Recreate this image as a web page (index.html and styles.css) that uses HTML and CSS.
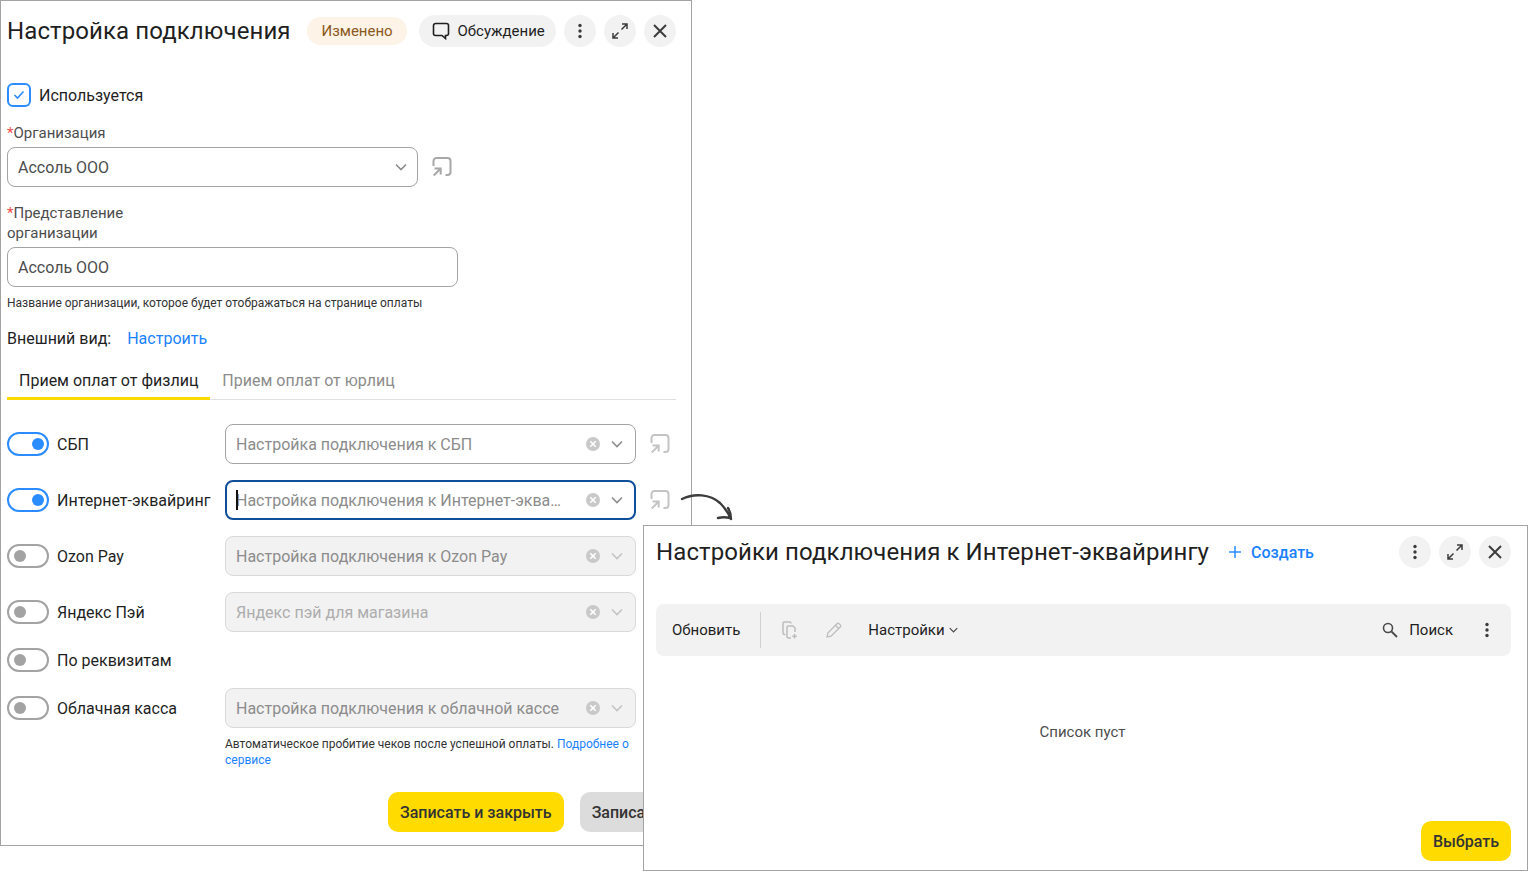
FILE: index.html
```html
<!DOCTYPE html>
<html lang="ru">
<head>
    <meta charset="UTF-8">
    <title>Настройка подключения</title>
    <link rel="stylesheet" href="styles.css">
</head>
<body>

<svg class="defs" width="0" height="0">
    <symbol id="i-link" viewBox="0 0 20 20">
        <path d="M1.5 9V4a3 3 0 0 1 3-3h11a3 3 0 0 1 3 3v11a3 3 0 0 1-3 3h-2M1.7 18.5l6.3-6.3M2.5 11.5H8.700V17.500" fill="none" stroke="currentColor" stroke-width="2"/>
    </symbol>
    <symbol id="i-chevron" viewBox="0 0 12 8">
        <path d="M1 1.500l5 5 5-5" fill="none" stroke="currentColor" stroke-width="1.600"/>
    </symbol>
    <symbol id="i-clear" viewBox="0 0 14 14">
        <circle cx="7" cy="7" r="7" fill="#c9c9c9"/>
        <path d="M4.300 4.300l5.400 5.400M9.700 4.300l-5.400 5.400" stroke="#fff" stroke-width="1.600"/>
    </symbol>
    <symbol id="i-dots" viewBox="0 0 4 16">
        <circle cx="2" cy="2.500" r="1.700" fill="currentColor"/>
        <circle cx="2" cy="8" r="1.700" fill="currentColor"/>
        <circle cx="2" cy="13.500" r="1.700" fill="currentColor"/>
    </symbol>
    <symbol id="i-expand" viewBox="0 0 16 16">
        <path d="M9.500 6.500L15 1M10 1h5v5M6.500 9.500L1 15M1 10v5h5" fill="none" stroke="currentColor" stroke-width="1.500"/>
    </symbol>
    <symbol id="i-close" viewBox="0 0 14 14">
        <path d="M1 1l12 12M13 1L1 13" fill="none" stroke="currentColor" stroke-width="2"/>
    </symbol>
</svg>

<!-- first window -->
<div class="window window-form">
    <div class="head">
        <h1 class="title">Настройка подключения</h1>
        <span class="badge">Изменено</span>
        <button class="pill">
            <svg class="ico-chat" viewBox="0 0 18 18"><path d="M3.500 1.500h11a2 2 0 0 1 2 2v8a2 2 0 0 1-2 2h-1v3l-3.500-3h-6.500a2 2 0 0 1-2-2v-8a2 2 0 0 1 2-2z" fill="none" stroke="currentColor" stroke-width="1.600"/></svg>
            Обсуждение
        </button>
        <button class="round"><svg class="ico-dots"><use href="#i-dots"/></svg></button>
        <button class="round"><svg class="ico-expand"><use href="#i-expand"/></svg></button>
        <button class="round"><svg class="ico-close"><use href="#i-close"/></svg></button>
    </div>

    <div class="check-row">
        <span class="checkbox">
            <svg viewBox="0 0 12 10"><path d="M1.500 5l3 3 6-6.500" fill="none" stroke="#2b8cff" stroke-width="1.600"/></svg>
        </span>
        Используется
    </div>

    <div class="label label-org"><span class="req">*</span>Организация</div>
    <div class="org-row">
        <div class="field field-org">
            <span class="value">Ассоль ООО</span>
            <svg class="ico-chevron"><use href="#i-chevron"/></svg>
        </div>
        <svg class="ico-link"><use href="#i-link"/></svg>
    </div>

    <div class="label label-name"><span class="req">*</span>Представление<br>организации</div>
    <div class="field field-name"><span class="value">Ассоль ООО</span></div>
    <div class="hint hint-name">Название организации, которое будет отображаться на странице оплаты</div>

    <div class="look-row">
        <span>Внешний вид:</span>
        <a class="link">Настроить</a>
    </div>

    <div class="tabs">
        <div class="tab active">Прием оплат от физлиц</div>
        <div class="tab">Прием оплат от юрлиц</div>
    </div>

    <div class="services">
        <div class="service">
            <span class="toggle on"></span>
            <span class="service-name">СБП</span>
            <div class="field field-service">
                <span class="placeholder">Настройка подключения к СБП</span>
                <svg class="ico-clear"><use href="#i-clear"/></svg>
                <svg class="ico-chevron"><use href="#i-chevron"/></svg>
            </div>
            <svg class="ico-link"><use href="#i-link"/></svg>
        </div>
        <div class="service">
            <span class="toggle on"></span>
            <span class="service-name">Интернет-эквайринг</span>
            <div class="field field-service focused">
                <span class="caret"></span>
                <span class="placeholder">Настройка подключения к Интернет-эквайрингу</span>
                <svg class="ico-clear"><use href="#i-clear"/></svg>
                <svg class="ico-chevron"><use href="#i-chevron"/></svg>
            </div>
            <svg class="ico-link"><use href="#i-link"/></svg>
        </div>
        <div class="service">
            <span class="toggle"></span>
            <span class="service-name">Ozon Pay</span>
            <div class="field field-service disabled">
                <span class="placeholder">Настройка подключения к Ozon Pay</span>
                <svg class="ico-clear"><use href="#i-clear"/></svg>
                <svg class="ico-chevron"><use href="#i-chevron"/></svg>
            </div>
        </div>
        <div class="service">
            <span class="toggle"></span>
            <span class="service-name">Яндекс Пэй</span>
            <div class="field field-service disabled">
                <span class="placeholder faint">Яндекс пэй для магазина</span>
                <svg class="ico-clear"><use href="#i-clear"/></svg>
                <svg class="ico-chevron"><use href="#i-chevron"/></svg>
            </div>
        </div>
        <div class="service">
            <span class="toggle"></span>
            <span class="service-name">По реквизитам</span>
        </div>
        <div class="service">
            <span class="toggle"></span>
            <span class="service-name">Облачная касса</span>
            <div class="field field-service disabled">
                <span class="placeholder">Настройка подключения к облачной кассе</span>
                <svg class="ico-clear"><use href="#i-clear"/></svg>
                <svg class="ico-chevron"><use href="#i-chevron"/></svg>
            </div>
        </div>
    </div>
    <div class="hint hint-kassa">Автоматическое пробитие чеков после успешной оплаты. <a class="link">Подробнее о сервисе</a></div>

    <div class="actions">
        <button class="btn btn-yellow">Записать и закрыть</button>
        <button class="btn btn-gray">Записать</button>
    </div>
</div>

<!-- arrow between the windows -->
<svg class="arrow" viewBox="0 0 56 32">
    <path d="M2 9C14 3 30 4 40 13c4 4 8 9 11 16M50 28c-4-1-8-1-12 0M51 29c0-4-1-8-3-11" fill="none" stroke="#3c3c3c" stroke-width="2.400" stroke-linecap="round"/>
</svg>

<!-- second window -->
<div class="window window-list">
    <div class="head head-list">
        <h1 class="title">Настройки подключения к Интернет-эквайрингу</h1>
        <a class="create">
            <svg viewBox="0 0 12 12"><path d="M6 0v12M0 6h12" stroke="#2b8cff" stroke-width="1.500"/></svg>
            Создать
        </a>
        <span class="spacer"></span>
        <button class="round"><svg class="ico-dots"><use href="#i-dots"/></svg></button>
        <button class="round"><svg class="ico-expand"><use href="#i-expand"/></svg></button>
        <button class="round"><svg class="ico-close"><use href="#i-close"/></svg></button>
    </div>

    <div class="toolbar">
        <span class="tool-text">Обновить</span>
        <span class="tool-sep"></span>
        <svg class="ico-copy" viewBox="0 0 16 18">
            <path d="M3.500 13.500h-1a1.500 1.500 0 0 1-1.500-1.500V2.500A1.500 1.500 0 0 1 2.500 1h5A1.500 1.500 0 0 1 9 2.500M5 6.500A1.500 1.500 0 0 1 6.500 5h4.500l2 2v4M5 6.500v9A1.500 1.500 0 0 0 6.500 17H9M12.500 13v4.500M10.300 15.300h4.500" fill="none" stroke="#bdbdbd" stroke-width="1.500"/>
        </svg>
        <svg class="ico-pencil" viewBox="0 0 16 16">
            <path d="M1 15l.8-4L11 1.800a1.500 1.500 0 0 1 2.100 0l1.100 1.100a1.500 1.500 0 0 1 0 2.100L5 14.200zM9.500 3.300l3.200 3.200" fill="none" stroke="#bdbdbd" stroke-width="1.300"/>
        </svg>
        <span class="tool-text tool-menu">Настройки</span>
        <svg class="ico-chevron-small"><use href="#i-chevron"/></svg>
        <span class="spacer"></span>
        <svg class="ico-search" viewBox="0 0 16 16">
            <circle cx="6" cy="6" r="4.500" fill="none" stroke="#4a4a4a" stroke-width="1.600"/>
            <path d="M9.500 9.500L15 15" stroke="#4a4a4a" stroke-width="1.800"/>
        </svg>
        <span class="tool-text tool-find">Поиск</span>
        <svg class="ico-dots tool-dots"><use href="#i-dots"/></svg>
    </div>

    <div class="empty">Список пуст</div>

    <div class="actions-list">
        <button class="btn btn-yellow">Выбрать</button>
    </div>
</div>

</body>
</html>
```

FILE: styles.css
```css
* {
    box-sizing: border-box;
}
html, body {
    margin: 0;
    height: 871px;
    overflow: hidden;
    background: #fff;
}
body {
    position: relative;
    font-family: Roboto, "Liberation Sans", sans-serif;
    font-size: 16px;
    color: #1f1f1f;
}
button {
    font-family: inherit;
    border: 0;
    cursor: pointer;
}
.defs {
    position: absolute;
}
.window {
    position: absolute;
    background: #fff;
    border: 1px solid #a3a3a3;
}
.window-form {
    left: 0;
    top: 0;
    width: 692px;
    height: 846px;
    padding: 0 15px 0 6px;
    overflow: hidden;
}
.window-list {
    left: 643px;
    top: 525px;
    width: 885px;
    height: 346px;
    padding: 0 16px 0 12px;
}
.arrow {
    position: absolute;
    left: 680px;
    top: 490px;
    width: 56px;
    height: 32px;
    z-index: 2;
}
.head {
    display: flex;
    align-items: center;
    height: 32px;
    margin-top: 14px;
}
.head-list {
    margin-top: 10px;
}
.title {
    margin: 0;
    font-size: 24px;
    font-weight: 400;
    letter-spacing: 0.1px;
    white-space: nowrap;
}
.badge {
    margin-left: 16px;
    height: 28px;
    width: 101px;
    border-radius: 14px;
    background: #fdf3e6;
    color: #8a5a1c;
    font-size: 15px;
    line-height: 28px;
    text-align: center;
}
.pill {
    display: flex;
    align-items: center;
    gap: 7px;
    margin-left: 12px;
    width: 137px;
    height: 32px;
    padding: 0 0 0 13px;
    border-radius: 16px;
    background: #f2f2f2;
    font-size: 15px;
    color: #1f1f1f;
}
.ico-chat {
    width: 18px;
    height: 18px;
}
.round {
    display: flex;
    align-items: center;
    justify-content: center;
    width: 32px;
    height: 32px;
    margin-left: 8px;
    padding: 0;
    border-radius: 50%;
    background: #f2f2f2;
    color: #3c3c3c;
}
.ico-dots {
    width: 4px;
    height: 16px;
    color: #3c3c3c;
}
.ico-expand {
    width: 16px;
    height: 16px;
}
.ico-close {
    width: 14px;
    height: 14px;
}
.check-row {
    display: flex;
    align-items: center;
    gap: 8px;
    margin-top: 36px;
    height: 24px;
}
.checkbox {
    display: flex;
    align-items: center;
    justify-content: center;
    width: 24px;
    height: 24px;
    border: 2px solid #2b8cff;
    border-radius: 6px;
}
.checkbox svg {
    width: 12px;
    height: 10px;
}
.label {
    font-size: 15px;
    line-height: 20px;
    color: #4d4d4d;
}
.req {
    color: #f24b4b;
}
.label-org {
    margin-top: 16px;
}
.org-row {
    display: flex;
    align-items: center;
    margin-top: 4px;
}
.field {
    display: flex;
    align-items: center;
    height: 40px;
    border: 1px solid #a3a3a3;
    border-radius: 8px;
    padding: 0 10px;
    background: #fff;
}
.value {
    flex: 1;
    color: #4d4d4d;
}
.field-org {
    width: 411px;
}
.org-row .ico-link {
    margin-left: 14px;
}
.ico-link {
    width: 20px;
    height: 20px;
    color: #c4c4c4;
    flex: none;
}
.org-row .ico-link {
    color: #a8a8a8;
}
.ico-chevron {
    width: 12px;
    height: 8px;
    color: #8c8c8c;
    flex: none;
}
.label-name {
    margin-top: 16px;
}
.field-name {
    width: 451px;
    margin-top: 4px;
}
.hint {
    font-size: 12px;
    line-height: 16px;
    color: #333;
}
.hint-name {
    margin-top: 8px;
}
.look-row {
    display: flex;
    gap: 16px;
    margin-top: 18px;
    line-height: 20px;
}
.link {
    color: #1a82ff;
}
.tabs {
    display: flex;
    margin-top: 20px;
    height: 31px;
    border-bottom: 1px solid #e0e0e0;
}
.tab {
    padding: 0 12px;
    height: 31px;
    line-height: 24px;
    color: #8c8c8c;
}
.tab.active {
    color: #1f1f1f;
    border-bottom: 3px solid #ffdb00;
}
.services {
    display: flex;
    flex-direction: column;
    gap: 16px;
    margin-top: 24px;
}
.service {
    display: flex;
    align-items: center;
}
.toggle {
    position: relative;
    flex: none;
    width: 42px;
    height: 24px;
    border: 2px solid #a3a3a3;
    border-radius: 12px;
}
.toggle::after {
    content: "";
    position: absolute;
    left: 5px;
    top: 4px;
    width: 12px;
    height: 12px;
    border-radius: 50%;
    background: #a3a3a3;
}
.toggle.on {
    border-color: #2b8cff;
}
.toggle.on::after {
    left: 23px;
    background: #2b8cff;
}
.service-name {
    flex: none;
    width: 176px;
    padding-left: 8px;
}
.field-service {
    position: relative;
    width: 411px;
    padding-right: 12px;
}
.field-service .ico-link {
    margin-left: 14px;
}
.service > .ico-link {
    margin-left: 14px;
}
.placeholder {
    flex: 1;
    min-width: 0;
    overflow: hidden;
    white-space: nowrap;
    text-overflow: ellipsis;
    color: #8c8c8c;
}
.placeholder.faint {
    color: #adadad;
}
.ico-clear {
    width: 14px;
    height: 14px;
    margin: 0 11px 0 17px;
    flex: none;
}
.field-service.disabled {
    background: #f2f2f2;
    border-color: #d9d9d9;
}
.field-service.disabled .ico-chevron {
    color: #c4c4c4;
}
.field-service.focused {
    border: 2px solid #0f4f99;
    padding-left: 9px;
    padding-right: 11px;
}
.caret {
    position: absolute;
    left: 9px;
    top: 8px;
    width: 2px;
    height: 20px;
    background: #111;
}
.hint-kassa {
    width: 411px;
    margin: 8px 0 0 218px;
}
.actions {
    display: flex;
    gap: 16px;
    margin: 24px 0 0 381px;
    width: 340px;
}
.btn {
    flex: none;
    height: 40px;
    border-radius: 10px;
    font-size: 16px;
    font-weight: 500;
    padding: 0 12px;
    color: #333;
}
.btn-yellow {
    background: #ffdb00;
}
.btn-gray {
    background: #dcdcdc;
}
.create {
    display: flex;
    align-items: center;
    gap: 10px;
    margin-left: 20px;
    color: #1a82ff;
    font-weight: 500;
}
.create svg {
    width: 12px;
    height: 12px;
}
.spacer {
    flex: 1;
}
.toolbar {
    display: flex;
    align-items: center;
    height: 52px;
    margin-top: 36px;
    padding: 0 22px 0 16px;
    border-radius: 8px;
    background: #f2f2f2;
}
.tool-text {
    font-size: 15px;
}
.tool-sep {
    width: 1px;
    height: 36px;
    margin: 0 20px;
    background: #d0d0d0;
}
.ico-copy {
    width: 16px;
    height: 18px;
    margin-left: 1px;
}
.ico-pencil {
    width: 16px;
    height: 16px;
    margin-left: 28px;
}
.tool-menu {
    margin-left: 26px;
}
.ico-chevron-small {
    width: 9px;
    height: 6px;
    margin-left: 4px;
    color: #4a4a4a;
}
.ico-search {
    width: 16px;
    height: 16px;
}
.tool-find {
    margin-left: 11px;
}
.tool-dots {
    margin-left: 32px;
}
.empty {
    margin-top: 66px;
    margin-right: 0;
    text-align: center;
    font-size: 15px;
    line-height: 20px;
    color: #4d4d4d;
    padding-right: 2px;
}
.actions-list {
    display: flex;
    justify-content: flex-end;
    margin-top: 79px;
}
```
